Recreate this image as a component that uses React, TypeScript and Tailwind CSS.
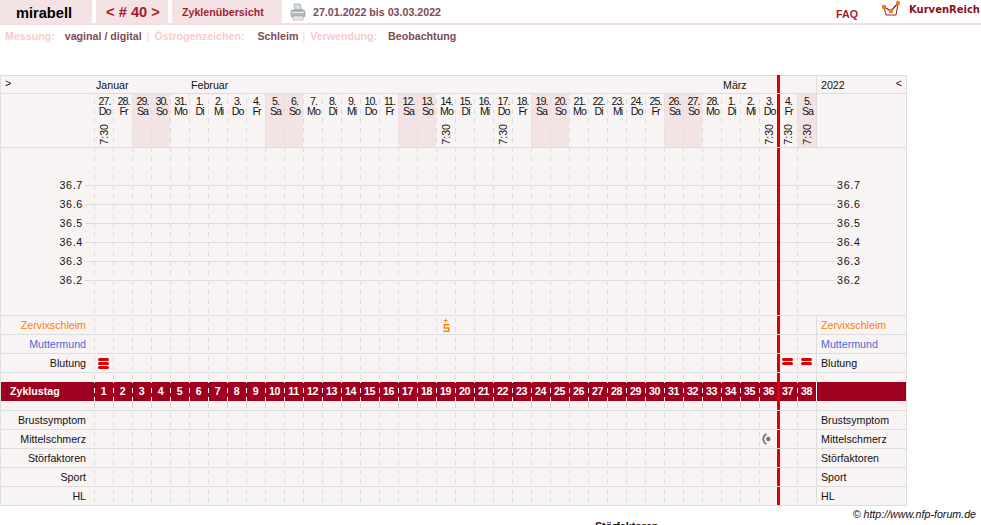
const wd = ["Do", "Fr", "Sa", "So", "Mo", "Di", "Mi"];
const dates = [27, 28, 29, 30, 31, ...Array.from({ length: 28 }, (_, i) => i + 1), 1, 2, 3, 4, 5];
const times = [0, 18, 21, 35, 36, 37];
const days = dates.map((d, i) => ({ d, w: wd[i % 7], we: i % 7 === 2 || i % 7 === 3, t: times.includes(i) }));

const dash =
  "bg-[linear-gradient(transparent_2px,#ddd_2px,#ddd_7px,transparent_7px,transparent_11px,#ddd_11px,#ddd_16px,transparent_16px)] bg-[length:1px_19px] bg-repeat-y";
const dashWhite =
  "bg-[linear-gradient(transparent_2px,#fff_2px,#fff_7px,transparent_7px,transparent_11px,#fff_11px,#fff_16px,transparent_16px)] bg-[length:1px_19px] bg-repeat-y bg-[position:0_4px]";

function RedLine({ top = false }: { top?: boolean }) {
  return <div className={`absolute left-[776px] bottom-0 w-[3px] bg-[#dd0000] z-10 ${top ? "top-[-1px]" : "top-0"}`} />;
}

function Pill() {
  return <div className="h-[3px] rounded-full bg-[#dd0000]" />;
}

function Three() {
  return (
    <div className="flex w-[11px] flex-col gap-px">
      <Pill />
      <Pill />
      <Pill />
    </div>
  );
}

function Two() {
  return (
    <div className="mt-[-4px] flex w-[11px] flex-col gap-px">
      <Pill />
      <Pill />
    </div>
  );
}

function Row({ label, color = "text-[#111]", icons = {} }: { label: string; color?: string; icons?: Record<number, React.ReactNode> }) {
  return (
    <div className="relative box-border flex h-[19px] border-b border-[#ddd]">
      <div className={`w-[93px] pr-2 text-right leading-[18px] ${color}`}>{label}</div>
      {days.map((_, i) => (
        <div key={i} className={`flex w-[19px] items-center justify-center ${dash}`}>{icons[i]}</div>
      ))}
      <div className={`w-[90px] border-l border-[#ddd] pl-1 leading-[18px] ${color}`}>{label}</div>
      <RedLine />
    </div>
  );
}

function Spacer({ shifted = false }: { shifted?: boolean }) {
  return (
    <div className="relative flex h-[9px]">
      <div className="w-[93px]" />
      {days.map((_, i) => (
        <div key={i} className={`w-[19px] ${dash} ${shifted ? "bg-[position:0_-9px]" : ""}`} />
      ))}
      <div className="w-[90px] border-l border-[#ddd]" />
      <RedLine />
    </div>
  );
}

function Slime() {
  return (
    <svg width="7" height="15" viewBox="0 0 7 15" className="ml-[1px]" fill="none" stroke="#ff8000">
      <path d="M2.7 0.5v4M.7 2.5h4" strokeWidth="0.9" />
      <path d="M6.5 6.7H1.3V10H5.7V13.3H0.3" strokeWidth="1.4" />
    </svg>
  );
}

function Pain() {
  return (
    <svg width="10" height="12" viewBox="0 0 10 12" fill="none" className="ml-[-3px]">
      <path d="M4.5 1A5.5 5.5 0 0 0 4.5 11" stroke="#777" strokeWidth="1.8" />
      <circle cx="6.3" cy="6" r="2.2" fill="#777" />
    </svg>
  );
}

export default function App() {
  return (
    <div className="relative h-[525px] w-[981px] overflow-hidden bg-white font-['Liberation_Sans',Arial,sans-serif] text-[10.67px] text-[#111]">
      <header className="flex h-[25px] border-b-2 border-[#f3dfe2]">
        <div className="w-[92px] bg-[#f3e3e5] pr-[4px] text-center text-[14.67px] font-bold leading-[26px] text-black">mirabell</div>
        <div className="ml-1 w-[72px] bg-[#f3e3e5] pl-[2px] text-center text-[14.67px] font-bold leading-[25px] text-[#a61c2e]">{"< # 40 >"}</div>
        <div className="ml-1 w-[110px] bg-[#f3e3e5] pl-[10px] font-bold leading-[24px] text-[#a61c2e]">Zyklenübersicht</div>
        <svg width="16" height="18" viewBox="0 0 16 18" className="ml-[8px] mt-[3px]">
          <path d="M4 1h6l2 6H5z" fill="#cfdcea" stroke="#8fa3b5" strokeWidth="0.7" />
          <rect x="1" y="7" width="14" height="7" rx="1.5" fill="#b5b9bd" stroke="#8a8f94" strokeWidth="0.6" />
          <rect x="3" y="13" width="10" height="4" fill="#e8e8e8" stroke="#999" strokeWidth="0.5" />
          <rect x="2" y="9" width="12" height="1" fill="#eceff1" />
        </svg>
        <div className="ml-[7px] font-bold leading-[24px] text-[#7d4a55]">27.01.2022 bis 03.03.2022</div>
        <div className="ml-auto mr-[23px] mt-[3px] font-bold leading-[22px] text-[#a61c2e]">FAQ</div>
        <div className="mr-px flex">
          <svg width="20" height="18" viewBox="0 0 20 18">
            <path d="M3 8Q5 13 5 15H15L17 4" fill="none" stroke="#a01830" strokeWidth="1" />
            <path d="M3 7l7 4 7-8" fill="none" stroke="#8a1020" strokeWidth="1.2" />
            <circle cx="3" cy="7" r="2.3" fill="#f08010" />
            <circle cx="10" cy="11" r="2.3" fill="#f08010" />
            <circle cx="17" cy="3" r="2.2" fill="#f08010" />
          </svg>
          <div className="ml-[8px] font-['DejaVu_Sans',sans-serif] text-[10px] font-bold leading-[20px] text-[#8a1020]">KurvenReich</div>
        </div>
      </header>

      <div className="flex h-[22px] pl-[5px] font-bold leading-[22px] text-[#7d4a55]">
        <span className="text-[#f9cccc]">Messung:</span>
        <span className="ml-[10px]">vaginal / digital</span>
        <span className="ml-[5px] font-normal text-[#f9cccc]">|</span>
        <span className="ml-[5px] text-[#f9cccc]">Östrogenzeichen:</span>
        <span className="ml-[13px]">Schleim</span>
        <span className="ml-[4px] font-normal text-[#f9cccc]">|</span>
        <span className="ml-[5px] text-[#f9cccc]">Verwendung:</span>
        <span className="ml-[11px]">Beobachtung</span>
      </div>

      <div className="mt-[28px] w-[907px] border-x border-t border-[#ddd] bg-[#f9f4f4]">
        <div className="relative flex h-[18px] border-b border-[#ddd] leading-[18px]">
          <div className="w-[93px] pl-[4px] leading-[14px]">&gt;</div>
          <div className="w-[95px] pl-[2px]">Januar</div>
          <div className="w-[532px] pl-[2px]">Februar</div>
          <div className="w-[95px] pl-[2px]">März</div>
          <div className="flex w-[90px] justify-between border-l border-[#ddd] pl-1 pr-[4px]">
            <span>2022</span>
            <span className="leading-[14px]">&lt;</span>
          </div>
          <RedLine top />
        </div>

        <div className="relative flex h-[54px] border-b border-[#ddd]">
          <div className="w-[93px]" />
          {days.map((x, i) => (
            <div
              key={i}
              className={`flex w-[19px] flex-col items-center pl-[2px] pt-[2px] text-center leading-[10px] tracking-[-1px] ${dash} bg-[position:0_-6px] ${x.we ? "bg-[#f3e3e5]" : ""}`}
            >
              <span>{x.d}.</span>
              <span>{x.w}</span>
              {x.t && <span className="mt-[8px] rotate-180 leading-[11px] tracking-normal [writing-mode:vertical-rl]">7:30</span>}
            </div>
          ))}
          <div className="w-[90px] border-l border-[#ddd]" />
          <RedLine />
        </div>

        <div className="relative h-[168px] border-b border-[#ddd] pt-[28px]">
          <div className="absolute left-[93px] top-0 bottom-0 flex">
            {days.map((_, i) => (
              <div key={i} className={`w-[19px] ${dash} bg-[position:0_-3px]`} />
            ))}
          </div>
          {[36.7, 36.6, 36.5, 36.4, 36.3, 36.2].map((t) => (
            <div key={t} className="relative flex h-[19px] items-center tracking-[0.7px]">
              <span className="mb-[2px] w-[82px] text-right">{t.toFixed(1)}</span>
              <div className="ml-[2px] h-px w-[750px] bg-[#ddd]" />
              <span className="mb-[2px] ml-[2px]">{t.toFixed(1)}</span>
            </div>
          ))}
          <RedLine />
        </div>

        <Row label="Zervixschleim" color="text-[#ff8000]" icons={{ 18: <Slime /> }} />
        <Row label="Muttermund" color="text-[#4b6ad8]" />
        <Row label="Blutung" icons={{ 0: <Three />, 36: <Two />, 37: <Two /> }} />
        <Spacer />

        <div className="relative flex h-[19px] bg-[#a00020] font-bold leading-[19px] text-white">
          <div className="w-[93px] pl-[9px]">Zyklustag</div>
          {days.map((_, i) => (
            <div key={i} className={`w-[19px] text-center tracking-[-0.5px] ${dashWhite}`}>{i + 1}</div>
          ))}
          <div className="w-[90px] border-l border-white" />
          <RedLine />
        </div>

        <Spacer shifted />
        <div className="h-px bg-[#ddd]" />
        <Row label="Brustsymptom" />
        <Row label="Mittelschmerz" icons={{ 35: <Pain /> }} />
        <Row label="Störfaktoren" />
        <Row label="Sport" />
        <Row label="HL" />
      </div>

      <div className="flex w-[976px] justify-end pt-px italic leading-[15px]">© http://www.nfp-forum.de</div>
      <div className="absolute left-[595px] top-[518px] font-bold">Störfaktoren</div>
    </div>
  );
}
